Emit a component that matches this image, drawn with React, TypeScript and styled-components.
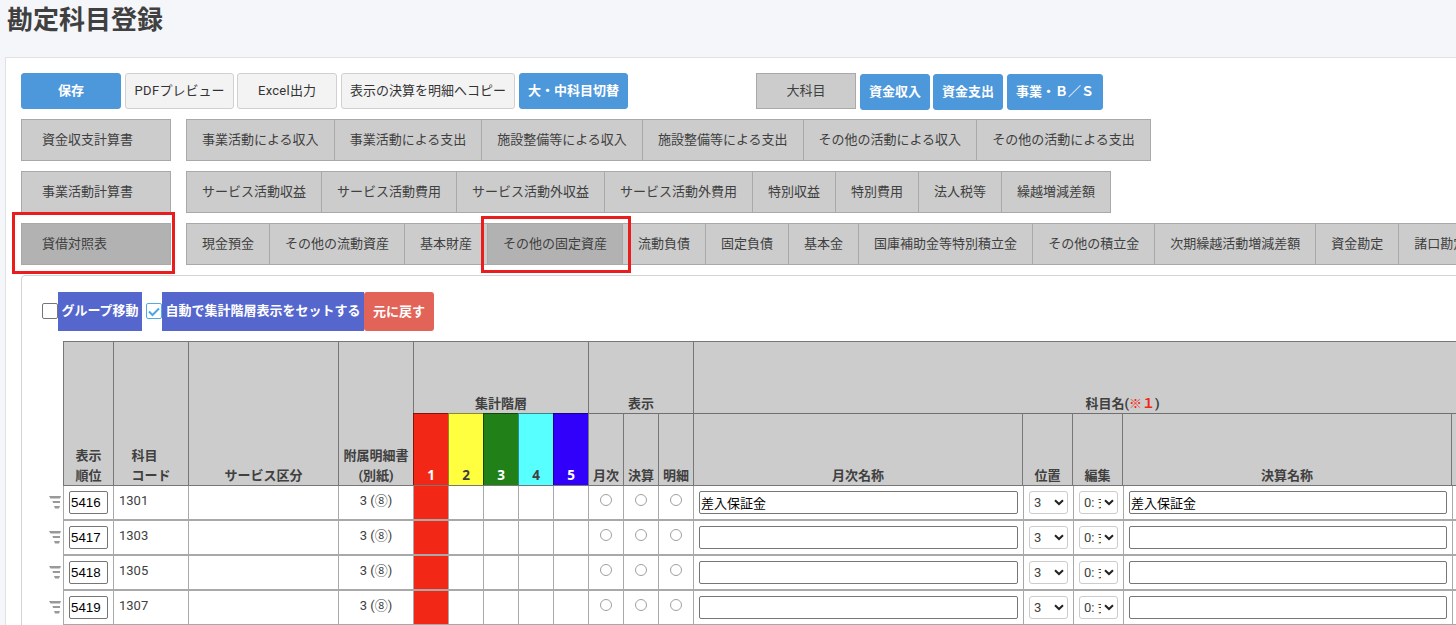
import React, { useState } from 'react';
import styled, { createGlobalStyle } from 'styled-components';

const GlobalStyle = createGlobalStyle`
  * {
    box-sizing: border-box;
  }

  body {
    margin: 0;
    background: #f4f6fa;
    color: #404040;
    font-family: Roboto, 'Noto Sans CJK JP', sans-serif;
    font-size: 13px;
    line-height: 20px;
    overflow: hidden;
  }
`;

const Page = styled.div`
  width: 1456px;
  height: 625px;
  padding-left: 5px;
  overflow: hidden;
`;

const Title = styled.h1`
  height: 57px;
  margin: 0;
  padding-left: 2px;
  font-size: 26px;
  line-height: 41px;
`;

const Panel = styled.main`
  width: 1900px;
  height: 700px;
  padding: 15px;
  border: 1px solid #dfe1e3;
  background: #fff;
`;

const Toolbar = styled.div`
  display: flex;
  align-items: flex-start;
  height: 46px;
`;

const Button = styled.button<{ $width: number; $gap?: number; $primary?: boolean; $low?: boolean }>`
  flex: none;
  width: ${({ $width }) => $width}px;
  height: 36px;
  margin: ${({ $low }) => ($low ? 1 : 0)}px 0 0 ${({ $gap }) => $gap ?? 0}px;
  padding: 0;
  border: 1px solid ${({ $primary }) => ($primary ? '#4d97db' : '#d0d0d0')};
  border-radius: 3px;
  background: ${({ $primary }) => ($primary ? '#4d97db' : '#f3f3f3')};
  color: ${({ $primary }) => ($primary ? '#fff' : '#333')};
  font: inherit;
  font-weight: ${({ $primary }) => ($primary ? 'bold' : 'normal')};
  white-space: nowrap;
  cursor: pointer;
`;

const LevelButton = styled(Button)`
  border-color: #a9a9a9;
  border-radius: 0;
  background: #ccc;
  color: #404040;
`;

const Latin = styled.span`
  letter-spacing: 0.3px;
`;

const TabRow = styled.div`
  display: flex;
  gap: 15px;
  height: 42px;
  margin-bottom: 10px;
`;

const StatementTab = styled.div<{ $active: boolean }>`
  position: relative;
  flex: none;
  width: 150px;
  padding: 10px 20px;
  border: 1px solid #a9a9a9;
  background: ${({ $active }) => ($active ? '#b2b2b2' : '#ccc')};
  cursor: pointer;
`;

const TabGroup = styled.div`
  display: flex;
  flex: none;
  border: solid #a9a9a9;
  border-width: 1px 0 1px 1px;
  background: #ccc;
`;

const Tab = styled.div<{ $active: boolean }>`
  position: relative;
  padding: 10px 15px;
  border-right: 1px solid #a9a9a9;
  background: ${({ $active }) => ($active ? '#b2b2b2' : '#ccc')};
  white-space: nowrap;
  cursor: pointer;
`;

const Marker = styled.span<{ $top: number; $right: number; $bottom: number; $left: number }>`
  position: absolute;
  z-index: 2;
  top: ${({ $top }) => -$top}px;
  right: ${({ $right }) => -$right}px;
  bottom: ${({ $bottom }) => -$bottom}px;
  left: ${({ $left }) => -$left}px;
  border: 3px solid #e91c1e;
  pointer-events: none;
`;

const Content = styled.section`
  height: 460px;
  padding: 16px 0 0 20px;
  border: 1px solid #d3d3d3;
  border-radius: 4px;
`;

const Options = styled.div`
  display: flex;
  align-items: center;
  height: 39px;
  margin-bottom: 10px;
`;

const Check = styled.button<{ $checked: boolean }>`
  display: flex;
  flex: none;
  width: 16px;
  height: 16px;
  margin-bottom: 1px;
  padding: 1px;
  border: 1px solid ${({ $checked }) => ($checked ? '#55aae3' : '#767676')};
  border-radius: 2px;
  background: #fff;
`;

const OptionLabel = styled.label<{ $width: number }>`
  width: ${({ $width }) => $width}px;
  height: 39px;
  margin-right: 4px;
  background: #5566cd;
  color: #fff;
  font-weight: bold;
  line-height: 37px;
  text-align: center;
  white-space: nowrap;

  &:last-of-type {
    margin-right: 0;
  }
`;

const ResetButton = styled.button`
  width: 70px;
  height: 39px;
  padding: 0;
  border: 0;
  border-radius: 3px;
  background: #e26358;
  color: #fff;
  font: inherit;
  font-weight: bold;
`;

const TableHead = styled.div`
  display: flex;
  height: 144px;
  margin-left: 21px;
  border-top: 1px solid #777;
  background: #ccc;
  font-weight: bold;
  text-align: center;
`;

const HeadCell = styled.div<{ $width: number; $bg?: string; $color?: string }>`
  display: flex;
  flex: none;
  flex-direction: column;
  justify-content: flex-end;
  width: ${({ $width }) => $width}px;
  border-left: 1px solid ${({ $bg }) => ($bg ? 'rgba(0, 0, 0, 0.45)' : '#777')};
  background: ${({ $bg }) => $bg ?? '#ccc'};
  color: ${({ $color }) => $color ?? '#404040'};
  line-height: 20px;
  white-space: pre;
`;

const HeadText = styled.span`
  margin-bottom: -1px;
`;

const LevelNumber = styled.span`
  font-family: 'Noto Sans', sans-serif;
  font-size: 13.5px;
`;

const HeadGroup = styled.div`
  flex: none;
`;

const GroupTitle = styled.div`
  height: 71px;
  padding-top: 52px;
  border-left: 1px solid #777;
`;

const GroupCells = styled.div`
  display: flex;
  height: 72px;

  > * {
    border-top: 1px solid rgba(0, 0, 0, 0.45);
  }
`;

const Note = styled.span`
  color: #f32716;
`;

const Row = styled.div`
  display: flex;
  height: 35px;
`;

const Handle = styled.div`
  flex: none;
  width: 21px;
  padding: 11px 0 0 7px;

  svg {
    display: block;
  }
`;

const Cells = styled.div<{ $first: boolean }>`
  display: flex;
  border: solid #a9a9a9;
  border-width: 1px 0;
  border-top-color: ${({ $first }) => ($first ? '#777' : '#a9a9a9')};
`;

const Cell = styled.div<{ $width: number; $pad?: number; $center?: boolean; $bg?: string }>`
  flex: none;
  width: ${({ $width }) => $width}px;
  padding: 5px 0 0 ${({ $pad }) => $pad ?? 0}px;
  border-left: 1px solid #a9a9a9;
  background: ${({ $bg }) => $bg ?? '#fff'};
  text-align: ${({ $center }) => ($center ? 'center' : 'left')};
`;

const Field = styled.input<{ $width: number }>`
  display: block;
  width: ${({ $width }) => $width}px;
  height: 23px;
  padding: 1px;
  border: 1px solid #767676;
  border-radius: 2px;
  color: #000;
  font: 13px 'Liberation Sans', 'Noto Sans CJK JP', sans-serif;
`;

const OrderField = styled(Field)`
  font-size: 13.333px;
`;

const Picker = styled.div`
  display: flex;
  align-items: center;
  justify-content: space-between;
  width: 39px;
  height: 23px;
  padding: 0 3px 0 4px;
  border: 1px solid #ccc;
  border-radius: 3px;
`;

const PickerText = styled.span`
  width: 17px;
  overflow: hidden;
  white-space: nowrap;
`;

const Circle = styled.span`
  display: block;
  width: 12px;
  height: 12px;
  margin: 3px auto 0;
  border: 1px solid #a0a0a0;
  border-radius: 50%;
`;

const statements = [
  {
    name: '資金収支計算書',
    tabs: ['事業活動による収入', '事業活動による支出', '施設整備等による収入', '施設整備等による支出', 'その他の活動による収入', 'その他の活動による支出'],
  },
  {
    name: '事業活動計算書',
    tabs: ['サービス活動収益', 'サービス活動費用', 'サービス活動外収益', 'サービス活動外費用', '特別収益', '特別費用', '法人税等', '繰越増減差額'],
  },
  {
    name: '貸借対照表',
    tabs: ['現金預金', 'その他の流動資産', '基本財産', 'その他の固定資産', '流動負債', '固定負債', '基本金', '国庫補助金等特別積立金', 'その他の積立金', '次期繰越活動増減差額', '資金勘定', '諸口勘定'],
  },
];

const levels = [
  { bg: '#f32716', color: '#fff' },
  { bg: '#ffff40', color: '#404040' },
  { bg: '#218018', color: '#fff' },
  { bg: '#58ffff', color: '#404040' },
  { bg: '#3000fa', color: '#fff' },
];

const accounts = [
  { order: '5416', code: '1301', name: '差入保証金' },
  { order: '5417', code: '1303', name: '' },
  { order: '5418', code: '1305', name: '' },
  { order: '5419', code: '1307', name: '' },
];

const Chevron = () => (
  <svg width="10" height="7" viewBox="0 0 10 7" fill="none" stroke="#222" strokeWidth="2">
    <path d="M1 1.2 5 5 9 1.2" />
  </svg>
);

const Select = ({ text }: { text: string }) => (
  <Picker>
    <PickerText>{text}</PickerText>
    <Chevron />
  </Picker>
);

const Head = ({ width, text }: { width: number; text: string }) => (
  <HeadCell $width={width}>
    <HeadText>{text}</HeadText>
  </HeadCell>
);

const App: React.FC = () => {
  const [statement, setStatement] = useState('貸借対照表');
  const [tab, setTab] = useState('その他の固定資産');
  const [grouped, setGrouped] = useState(false);
  const [auto, setAuto] = useState(true);

  return (
    <Page>
      <GlobalStyle />
      <Title>勘定科目登録</Title>
      <Panel>
        <Toolbar>
          <Button $width={100} $primary>保存</Button>
          <Button $width={109} $gap={4}><Latin>PDF</Latin>プレビュー</Button>
          <Button $width={100} $gap={3}><Latin>Excel</Latin>出力</Button>
          <Button $width={174} $gap={4}>表示の決算を明細へコピー</Button>
          <Button $width={109} $gap={4} $primary>大・中科目切替</Button>
          <LevelButton $width={100} $gap={128}>大科目</LevelButton>
          <Button $width={70} $gap={4} $primary $low>資金収入</Button>
          <Button $width={70} $gap={3} $primary $low>資金支出</Button>
          <Button $width={96} $gap={4} $primary $low>事業・Ｂ／Ｓ</Button>
        </Toolbar>

        {statements.map((s) => (
          <TabRow key={s.name}>
            <StatementTab $active={s.name === statement} onClick={() => setStatement(s.name)}>
              {s.name}
              {s.name === statement && <Marker $top={12} $right={5} $bottom={10} $left={10} />}
            </StatementTab>
            <TabGroup>
              {s.tabs.map((name) => (
                <Tab key={name} $active={name === tab} onClick={() => setTab(name)}>
                  {name}
                  {name === tab && <Marker $top={8} $right={9} $bottom={9} $left={7} />}
                </Tab>
              ))}
            </TabGroup>
          </TabRow>
        ))}

        <Content>
          <Options>
            <Check $checked={grouped} onClick={() => setGrouped(!grouped)} />
            <OptionLabel $width={84}>グループ移動</OptionLabel>
            <Check $checked={auto} onClick={() => setAuto(!auto)}>
              {auto && (
                <svg width="12" height="12" viewBox="0 0 12 12" fill="none" stroke="#4aa8e6" strokeWidth="2">
                  <path d="M1 6.5 4.5 10 11 3.5" />
                </svg>
              )}
            </Check>
            <OptionLabel $width={202}>自動で集計階層表示をセットする</OptionLabel>
            <ResetButton>元に戻す</ResetButton>
          </Options>

          <TableHead>
            <Head width={50} text={'表示\n順位'} />
            <Head width={75} text={'科目　\nコード'} />
            <Head width={150} text="サービス区分" />
            <Head width={75} text={'附属明細書\n(別紙)'} />
            <HeadGroup>
              <GroupTitle>集計階層</GroupTitle>
              <GroupCells>
                {levels.map((level, i) => (
                  <HeadCell key={level.bg} $width={35} $bg={level.bg} $color={level.color}>
                    <LevelNumber>{i + 1}</LevelNumber>
                  </HeadCell>
                ))}
              </GroupCells>
            </HeadGroup>
            <HeadGroup>
              <GroupTitle>表示</GroupTitle>
              <GroupCells>
                <Head width={35} text="月次" />
                <Head width={35} text="決算" />
                <Head width={35} text="明細" />
              </GroupCells>
            </HeadGroup>
            <HeadGroup>
              <GroupTitle>
                科目名(<Note>※１</Note>)
              </GroupTitle>
              <GroupCells>
                <Head width={329} text="月次名称" />
                <Head width={50} text="位置" />
                <Head width={50} text="編集" />
                <Head width={329} text="決算名称" />
                <Head width={100} text="" />
              </GroupCells>
            </HeadGroup>
          </TableHead>

          {accounts.map((account, i) => (
            <Row key={account.code}>
              <Handle>
                <svg width="12" height="13" viewBox="0 0 12 13" fill="#999">
                  <path d="M0 0h12l-1 2.5H1.5zM3.5 5H11v2H4zM5 10h6l-1 2.5H6z" />
                </svg>
              </Handle>
              <Cells $first={i === 0}>
                <Cell $width={50} $pad={5}>
                  <OrderField $width={39} defaultValue={account.order} />
                </Cell>
                <Cell $width={75} $pad={5}>{account.code}</Cell>
                <Cell $width={150} />
                <Cell $width={75} $center>3 (⑧)</Cell>
                {levels.map((level, n) => (
                  <Cell key={level.bg} $width={35} $bg={n === 0 ? level.bg : undefined} />
                ))}
                <Cell $width={35} $center><Circle /></Cell>
                <Cell $width={35} $center><Circle /></Cell>
                <Cell $width={35} $center><Circle /></Cell>
                <Cell $width={330} $pad={5}>
                  <Field $width={319} defaultValue={account.name} />
                </Cell>
                <Cell $width={50} $pad={5}><Select text="3" /></Cell>
                <Cell $width={50} $pad={5}><Select text="0: 式" /></Cell>
                <Cell $width={329} $pad={5}>
                  <Field $width={318} defaultValue={account.name} />
                </Cell>
                <Cell $width={100} />
              </Cells>
            </Row>
          ))}
        </Content>
      </Panel>
    </Page>
  );
};

export default App;
